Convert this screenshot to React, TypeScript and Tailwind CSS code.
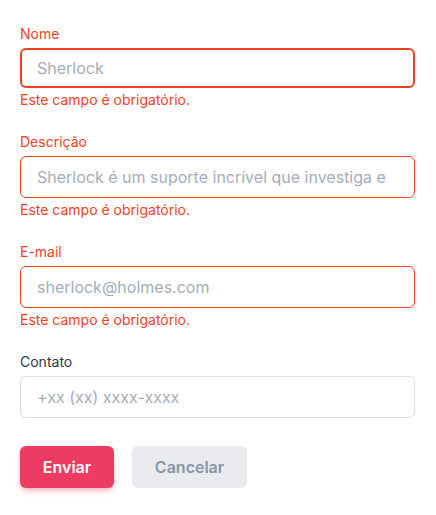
import React from 'react'

type FieldProps = {
  label: string
  placeholder: string
  error?: boolean
  focused?: boolean
}

const Field: React.FunctionComponent<FieldProps> = ({ label, placeholder, error, focused }) => {
  return (
    <div className={error ? 'flex flex-col mb-[22px]' : 'flex flex-col'}>
      <label className={`h-5 mb-1 text-sm leading-5 ${error ? 'text-[#f4421f]' : 'text-[#2d3748]'}`}>{label}</label>
      <input
        autoFocus={focused}
        placeholder={placeholder}
        className={`w-full rounded-md px-4 text-base outline-none placeholder:text-[#a6adb8] bg-white ${
          focused
            ? 'h-10 border-2 border-[#f4421f] px-[15px]'
            : error
              ? 'h-[42px] border border-[#f4421f]'
              : 'h-[42px] border border-[#d9dde3]'
        }`}
      />
      {error && <span className="h-5 mt-0.5 text-sm leading-5 text-[#f4421f]">Este campo é obrigatório.</span>}
    </div>
  )
}

export default function App() {
  return (
    <div className="min-h-screen bg-white px-5 pt-6 font-['Inter',sans-serif]">
      <form className="flex flex-col w-[395px]">
        <Field label="Nome" placeholder="Sherlock" error focused />
        <Field label="Descrição" placeholder="Sherlock é um suporte incrível que investiga e" error />
        <Field label="E-mail" placeholder="sherlock@holmes.com" error />
        <Field label="Contato" placeholder="+xx (xx) xxxx-xxxx" />
        <div className="flex gap-[18px] mt-7">
          <button type="button" className="h-[42px] w-[94px] rounded-md bg-[#ec3c64] text-white font-semibold text-base shadow-md shadow-[#ec3c64]/30">
            Enviar
          </button>
          <button type="button" className="h-[42px] w-[115px] rounded-md bg-[#e9ebef] text-[#8895a7] font-semibold text-base">
            Cancelar
          </button>
        </div>
      </form>
    </div>
  )
}
